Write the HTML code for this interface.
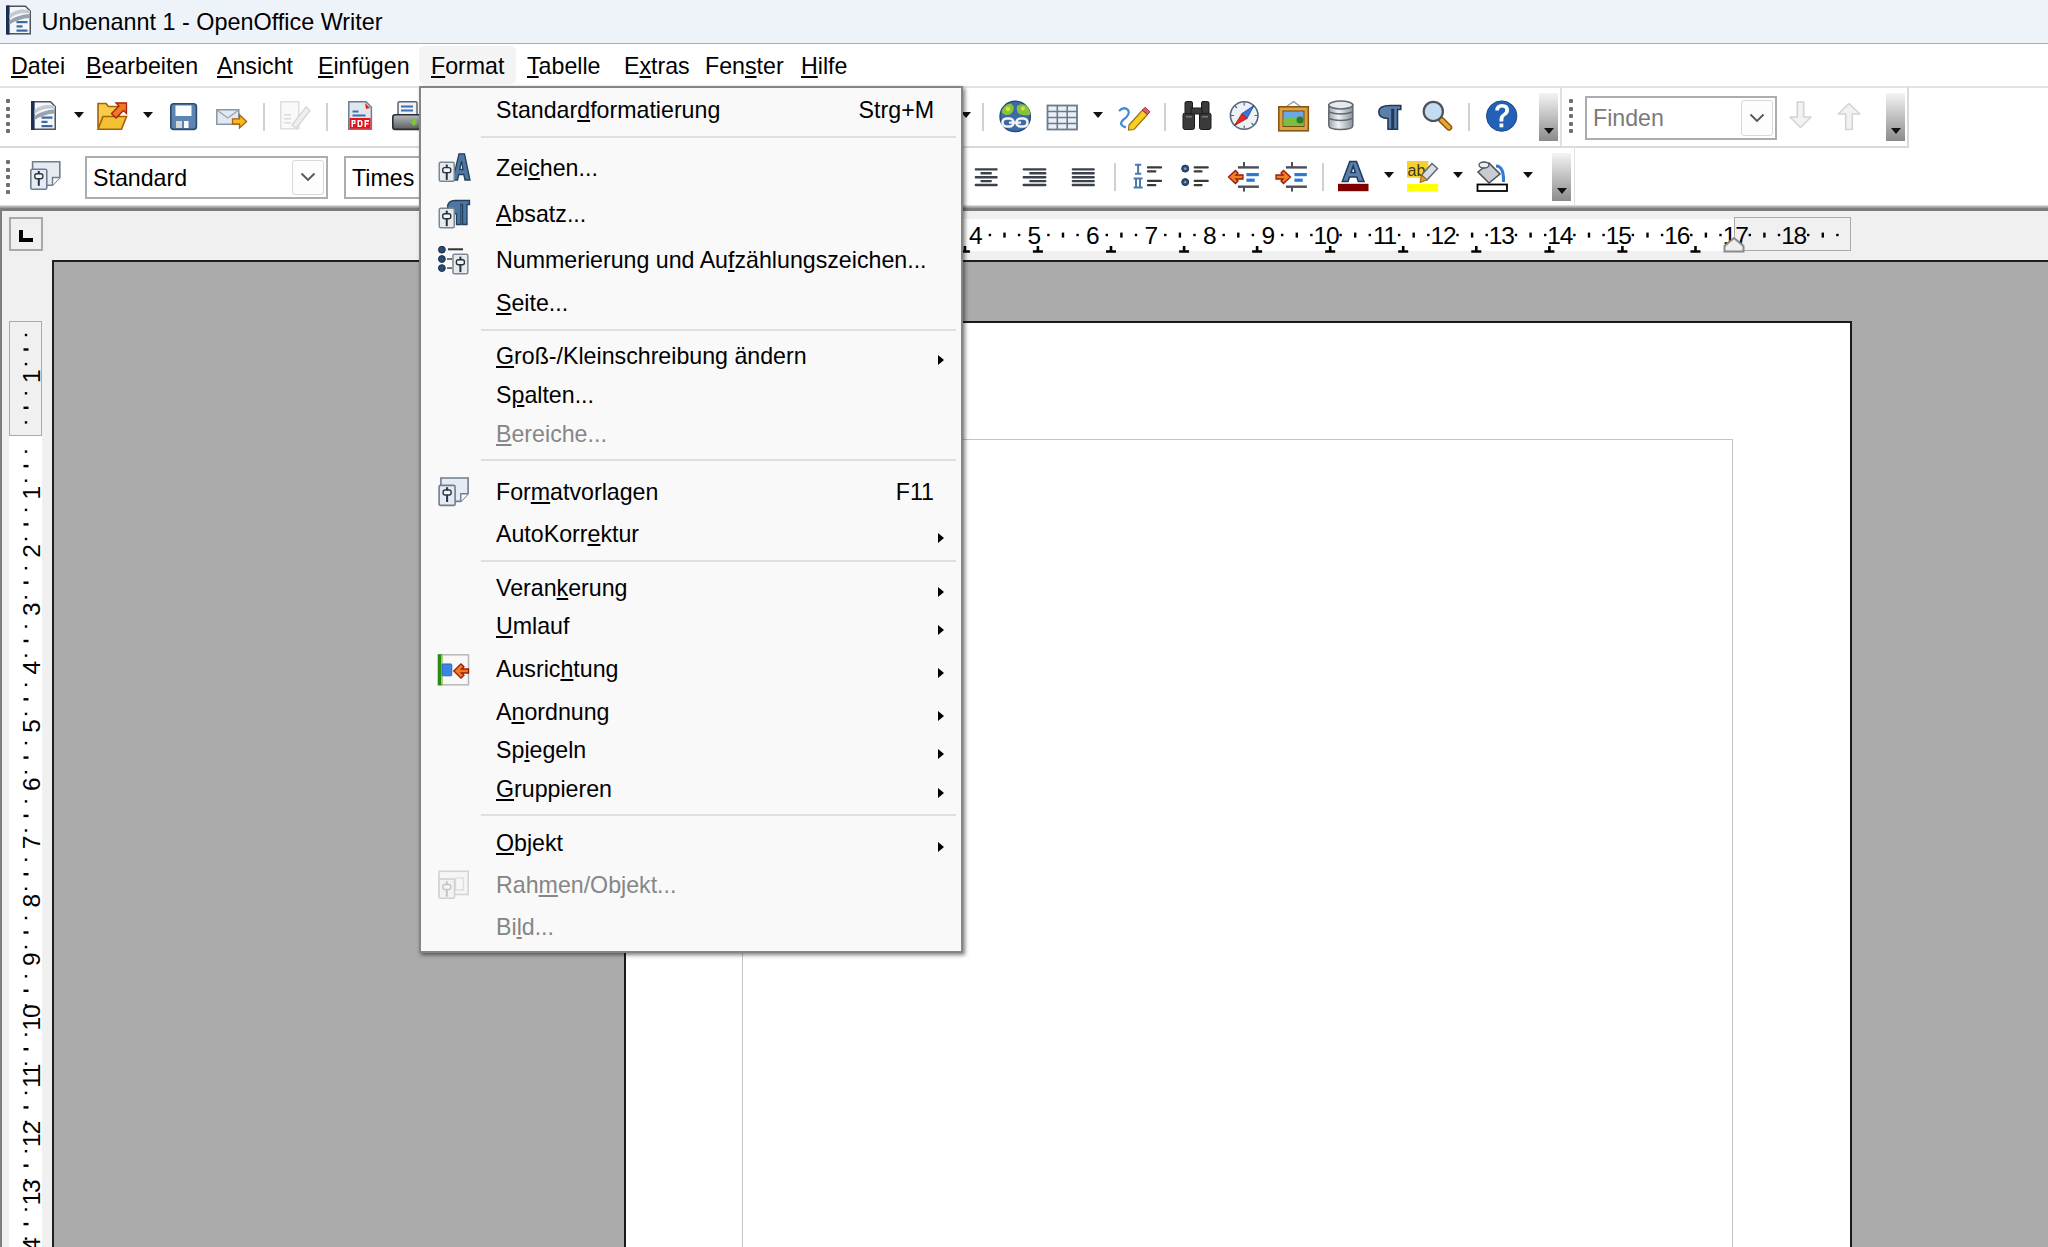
<!DOCTYPE html>
<html><head><meta charset="utf-8"><title>OpenOffice Writer</title>
<style>
html,body{margin:0;padding:0}
body{width:2048px;height:1247px;position:relative;overflow:hidden;background:#fff;font-family:'Liberation Sans', sans-serif}
.t{position:absolute;white-space:nowrap;line-height:30px}
svg{overflow:hidden}
u{text-decoration:underline;text-decoration-thickness:2px;text-underline-offset:2px}
</style></head><body>
<div style="position:absolute;left:0px;top:0px;width:2048px;height:43px;background:#eef3fa"></div>
<div style="position:absolute;left:0px;top:43px;width:2048px;height:1px;background:#a9abae"></div>
<div class="t" style="left:41.5px;top:7px;font-size:23.4px;color:#000;">Unbenannt 1 - OpenOffice Writer</div>
<div style="position:absolute;left:0px;top:44px;width:2048px;height:42px;background:#fff"></div>
<div style="position:absolute;left:419px;top:45.5px;width:97px;height:38.5px;background:#f4f4f4;border-radius:5px"></div>
<div class="t" style="left:11px;top:51px;font-size:23.2px;color:#000;"><u>D</u>atei</div>
<div class="t" style="left:86px;top:51px;font-size:23.2px;color:#000;"><u>B</u>earbeiten</div>
<div class="t" style="left:217px;top:51px;font-size:23.2px;color:#000;"><u>A</u>nsicht</div>
<div class="t" style="left:318px;top:51px;font-size:23.2px;color:#000;"><u>E</u>infügen</div>
<div class="t" style="left:431px;top:51px;font-size:23.2px;color:#000;"><u>F</u>ormat</div>
<div class="t" style="left:527px;top:51px;font-size:23.2px;color:#000;"><u>T</u>abelle</div>
<div class="t" style="left:624px;top:51px;font-size:23.2px;color:#000;">E<u>x</u>tras</div>
<div class="t" style="left:705px;top:51px;font-size:23.2px;color:#000;">Fen<u>s</u>ter</div>
<div class="t" style="left:801px;top:51px;font-size:23.2px;color:#000;"><u>H</u>ilfe</div>
<div style="position:absolute;left:0px;top:87px;width:2048px;height:118px;background:#fff"></div>
<div style="position:absolute;left:0px;top:85.5px;width:2048px;height:2px;background:#e4e4e4"></div>
<div style="position:absolute;left:0px;top:146px;width:1909px;height:1.8px;background:#dadada"></div>
<div style="position:absolute;left:1559.8px;top:87px;width:1.8px;height:59px;background:#e0e0e0"></div>
<div style="position:absolute;left:1907.2px;top:87px;width:1.8px;height:60px;background:#dadada"></div>
<div style="position:absolute;left:1573.5px;top:147px;width:1.8px;height:58px;background:#e0e0e0"></div>
<div style="position:absolute;left:0px;top:205px;width:2048px;height:6px;background:linear-gradient(#e6e6e6,#a8a8a8 35%,#7b7b7b 60%,#7b7b7b)"></div>
<div style="position:absolute;left:6px;top:99px;width:4px;height:4px;background:#6f6f6f;border-radius:1px"></div>
<div style="position:absolute;left:6px;top:107px;width:4px;height:4px;background:#6f6f6f;border-radius:1px"></div>
<div style="position:absolute;left:6px;top:114px;width:4px;height:4px;background:#6f6f6f;border-radius:1px"></div>
<div style="position:absolute;left:6px;top:122px;width:4px;height:4px;background:#6f6f6f;border-radius:1px"></div>
<div style="position:absolute;left:6px;top:129px;width:4px;height:4px;background:#6f6f6f;border-radius:1px"></div>
<div style="position:absolute;left:6px;top:160px;width:4px;height:4px;background:#6f6f6f;border-radius:1px"></div>
<div style="position:absolute;left:6px;top:168px;width:4px;height:4px;background:#6f6f6f;border-radius:1px"></div>
<div style="position:absolute;left:6px;top:175px;width:4px;height:4px;background:#6f6f6f;border-radius:1px"></div>
<div style="position:absolute;left:6px;top:183px;width:4px;height:4px;background:#6f6f6f;border-radius:1px"></div>
<div style="position:absolute;left:6px;top:190px;width:4px;height:4px;background:#6f6f6f;border-radius:1px"></div>
<div style="position:absolute;left:1569px;top:99px;width:4px;height:4px;background:#6f6f6f;border-radius:1px"></div>
<div style="position:absolute;left:1569px;top:107px;width:4px;height:4px;background:#6f6f6f;border-radius:1px"></div>
<div style="position:absolute;left:1569px;top:114px;width:4px;height:4px;background:#6f6f6f;border-radius:1px"></div>
<div style="position:absolute;left:1569px;top:122px;width:4px;height:4px;background:#6f6f6f;border-radius:1px"></div>
<div style="position:absolute;left:1569px;top:129px;width:4px;height:4px;background:#6f6f6f;border-radius:1px"></div>
<div style="position:absolute;left:263px;top:103px;width:2px;height:28px;background:#d0d0d0"></div>
<div style="position:absolute;left:326px;top:103px;width:2px;height:28px;background:#d0d0d0"></div>
<div style="position:absolute;left:982px;top:103px;width:2px;height:28px;background:#d0d0d0"></div>
<div style="position:absolute;left:1164px;top:103px;width:2px;height:28px;background:#d0d0d0"></div>
<div style="position:absolute;left:1468px;top:103px;width:2px;height:28px;background:#d0d0d0"></div>
<div style="position:absolute;left:1114px;top:163px;width:2px;height:28px;background:#d0d0d0"></div>
<div style="position:absolute;left:1322px;top:163px;width:2px;height:28px;background:#d0d0d0"></div>
<div style="position:absolute;left:73.5px;top:112px;width:0;height:0;border-left:5px solid transparent;border-right:5px solid transparent;border-top:6px solid #111"></div>
<div style="position:absolute;left:143px;top:112px;width:0;height:0;border-left:5px solid transparent;border-right:5px solid transparent;border-top:6px solid #111"></div>
<div style="position:absolute;left:1092.7px;top:112px;width:0;height:0;border-left:5px solid transparent;border-right:5px solid transparent;border-top:6px solid #111"></div>
<div style="position:absolute;left:1384px;top:172px;width:0;height:0;border-left:5px solid transparent;border-right:5px solid transparent;border-top:6px solid #111"></div>
<div style="position:absolute;left:1453.3px;top:172px;width:0;height:0;border-left:5px solid transparent;border-right:5px solid transparent;border-top:6px solid #111"></div>
<div style="position:absolute;left:1523px;top:172px;width:0;height:0;border-left:5px solid transparent;border-right:5px solid transparent;border-top:6px solid #111"></div>
<div style="position:absolute;left:961px;top:112px;width:0;height:0;border-left:5px solid transparent;border-right:5px solid transparent;border-top:6px solid #111"></div>
<div style="position:absolute;left:1539px;top:93px;width:19px;height:48px;background:linear-gradient(#f4f4f4,#8b8b8b)"></div>
<div style="position:absolute;left:1543.5px;top:128px;width:0;height:0;border-left:5px solid transparent;border-right:5px solid transparent;border-top:6px solid #111"></div>
<div style="position:absolute;left:1552px;top:153px;width:19px;height:48px;background:linear-gradient(#f4f4f4,#8b8b8b)"></div>
<div style="position:absolute;left:1556.5px;top:188px;width:0;height:0;border-left:5px solid transparent;border-right:5px solid transparent;border-top:6px solid #111"></div>
<div style="position:absolute;left:1886px;top:93px;width:19px;height:48px;background:linear-gradient(#f4f4f4,#8b8b8b)"></div>
<div style="position:absolute;left:1890.5px;top:128px;width:0;height:0;border-left:5px solid transparent;border-right:5px solid transparent;border-top:6px solid #111"></div>
<div style="position:absolute;left:85px;top:155.5px;width:243px;height:43px;background:#fff;border:2px solid #aaaeb2;box-sizing:border-box"></div>
<div style="position:absolute;left:292px;top:159.5px;width:32px;height:35px;background:#fdfdfd;border:1px solid #d8d8d8;border-radius:3px;box-sizing:border-box"></div>
<svg style="position:absolute;left:300px;top:172.0px" width="16" height="10"><path d="M1.5 1.5 L8 8 L14.5 1.5" fill="none" stroke="#555" stroke-width="1.8"/></svg>
<div style="position:absolute;left:344px;top:155.5px;width:90px;height:43px;background:#fff;border:2px solid #aaaeb2;box-sizing:border-box"></div>
<div style="position:absolute;left:1585px;top:95.5px;width:192px;height:44px;background:#fff;border:2px solid #aaaeb2;box-sizing:border-box"></div>
<div style="position:absolute;left:1741px;top:99.5px;width:32px;height:36px;background:#fdfdfd;border:1px solid #d8d8d8;border-radius:3px;box-sizing:border-box"></div>
<svg style="position:absolute;left:1749px;top:112.5px" width="16" height="10"><path d="M1.5 1.5 L8 8 L14.5 1.5" fill="none" stroke="#555" stroke-width="1.8"/></svg>
<div class="t" style="left:93px;top:163px;font-size:23.2px;color:#000;">Standard</div>
<div class="t" style="left:352px;top:163px;font-size:23.2px;color:#000;">Times</div>
<div class="t" style="left:1593px;top:103px;font-size:23.2px;color:#7a7a7a;">Finden</div>
<div style="position:absolute;left:0px;top:211px;width:2048px;height:1036px;background:#f0f0f0"></div>
<div style="position:absolute;left:0px;top:209px;width:2px;height:1038px;background:#7d7d7d"></div>
<div style="position:absolute;left:8.5px;top:217px;width:34px;height:34px;border:2px solid #a9a9a9;box-sizing:border-box;background:#f0f0f0"></div>
<svg style="position:absolute;left:19px;top:230px" width="15" height="12"><path d="M2 0 V10 H14" fill="none" stroke="#000" stroke-width="4"/></svg>
<div style="position:absolute;left:52px;top:260px;width:1996px;height:987px;background:#ababab"></div>
<div style="position:absolute;left:52px;top:260px;width:1996px;height:2px;background:#1e1e1e"></div>
<div style="position:absolute;left:52px;top:260px;width:2px;height:987px;background:#1e1e1e"></div>
<div style="position:absolute;left:742px;top:218.5px;width:992px;height:32.5px;background:#fff"></div>
<div style="position:absolute;left:1734px;top:217px;width:117px;height:34px;border:1.5px solid #a9a9a9;box-sizing:border-box;background:#f0f0f0"></div>
<div style="position:absolute;left:624px;top:217px;width:118px;height:34px;border:1.5px solid #a9a9a9;box-sizing:border-box;background:#f0f0f0"></div>
<div style="position:absolute;left:9px;top:436px;width:33px;height:811px;background:#fff"></div>
<div style="position:absolute;left:9px;top:321px;width:33px;height:115px;border:1.5px solid #a9a9a9;box-sizing:border-box;background:#f0f0f0"></div>
<svg style="position:absolute;left:0;top:0" width="2048" height="1247"><text x="624.6" y="244" text-anchor="middle" font-family="Liberation Sans" font-size="24.5" fill="#000" letter-spacing="-1.2">2</text><rect x="638.0" y="233.8" width="2.4" height="2.4" fill="#000"/><rect x="652.6" y="232.6" width="2.4" height="5" fill="#000"/><rect x="667.2" y="233.8" width="2.4" height="2.4" fill="#000"/><text x="683.0" y="244" text-anchor="middle" font-family="Liberation Sans" font-size="24.5" fill="#000" letter-spacing="-1.2">1</text><rect x="696.5" y="233.8" width="2.4" height="2.4" fill="#000"/><rect x="711.1" y="232.6" width="2.4" height="5" fill="#000"/><rect x="725.7" y="233.8" width="2.4" height="2.4" fill="#000"/><rect x="754.9" y="233.8" width="2.4" height="2.4" fill="#000"/><rect x="769.5" y="232.6" width="2.4" height="5" fill="#000"/><rect x="784.1" y="233.8" width="2.4" height="2.4" fill="#000"/><text x="800.0" y="244" text-anchor="middle" font-family="Liberation Sans" font-size="24.5" fill="#000" letter-spacing="-1.2">1</text><rect x="813.4" y="233.8" width="2.4" height="2.4" fill="#000"/><rect x="828.0" y="232.6" width="2.4" height="5" fill="#000"/><rect x="842.6" y="233.8" width="2.4" height="2.4" fill="#000"/><text x="858.4" y="244" text-anchor="middle" font-family="Liberation Sans" font-size="24.5" fill="#000" letter-spacing="-1.2">2</text><rect x="871.8" y="233.8" width="2.4" height="2.4" fill="#000"/><rect x="886.4" y="232.6" width="2.4" height="5" fill="#000"/><rect x="901.0" y="233.8" width="2.4" height="2.4" fill="#000"/><text x="916.9" y="244" text-anchor="middle" font-family="Liberation Sans" font-size="24.5" fill="#000" letter-spacing="-1.2">3</text><rect x="930.3" y="233.8" width="2.4" height="2.4" fill="#000"/><rect x="944.9" y="232.6" width="2.4" height="5" fill="#000"/><rect x="959.5" y="233.8" width="2.4" height="2.4" fill="#000"/><text x="975.3" y="244" text-anchor="middle" font-family="Liberation Sans" font-size="24.5" fill="#000" letter-spacing="-1.2">4</text><rect x="988.7" y="233.8" width="2.4" height="2.4" fill="#000"/><rect x="1003.3" y="232.6" width="2.4" height="5" fill="#000"/><rect x="1017.9" y="233.8" width="2.4" height="2.4" fill="#000"/><text x="1033.8" y="244" text-anchor="middle" font-family="Liberation Sans" font-size="24.5" fill="#000" letter-spacing="-1.2">5</text><rect x="1047.2" y="233.8" width="2.4" height="2.4" fill="#000"/><rect x="1061.8" y="232.6" width="2.4" height="5" fill="#000"/><rect x="1076.4" y="233.8" width="2.4" height="2.4" fill="#000"/><text x="1092.2" y="244" text-anchor="middle" font-family="Liberation Sans" font-size="24.5" fill="#000" letter-spacing="-1.2">6</text><rect x="1105.6" y="233.8" width="2.4" height="2.4" fill="#000"/><rect x="1120.2" y="232.6" width="2.4" height="5" fill="#000"/><rect x="1134.8" y="233.8" width="2.4" height="2.4" fill="#000"/><text x="1150.7" y="244" text-anchor="middle" font-family="Liberation Sans" font-size="24.5" fill="#000" letter-spacing="-1.2">7</text><rect x="1164.1" y="233.8" width="2.4" height="2.4" fill="#000"/><rect x="1178.7" y="232.6" width="2.4" height="5" fill="#000"/><rect x="1193.3" y="233.8" width="2.4" height="2.4" fill="#000"/><text x="1209.1" y="244" text-anchor="middle" font-family="Liberation Sans" font-size="24.5" fill="#000" letter-spacing="-1.2">8</text><rect x="1222.5" y="233.8" width="2.4" height="2.4" fill="#000"/><rect x="1237.1" y="232.6" width="2.4" height="5" fill="#000"/><rect x="1251.7" y="233.8" width="2.4" height="2.4" fill="#000"/><text x="1267.6" y="244" text-anchor="middle" font-family="Liberation Sans" font-size="24.5" fill="#000" letter-spacing="-1.2">9</text><rect x="1281.0" y="233.8" width="2.4" height="2.4" fill="#000"/><rect x="1295.6" y="232.6" width="2.4" height="5" fill="#000"/><rect x="1310.2" y="233.8" width="2.4" height="2.4" fill="#000"/><text x="1326.0" y="244" text-anchor="middle" font-family="Liberation Sans" font-size="24.5" fill="#000" letter-spacing="-1.2">10</text><rect x="1339.4" y="233.8" width="2.4" height="2.4" fill="#000"/><rect x="1354.0" y="232.6" width="2.4" height="5" fill="#000"/><rect x="1368.6" y="233.8" width="2.4" height="2.4" fill="#000"/><text x="1384.5" y="244" text-anchor="middle" font-family="Liberation Sans" font-size="24.5" fill="#000" letter-spacing="-1.2">11</text><rect x="1397.9" y="233.8" width="2.4" height="2.4" fill="#000"/><rect x="1412.5" y="232.6" width="2.4" height="5" fill="#000"/><rect x="1427.1" y="233.8" width="2.4" height="2.4" fill="#000"/><text x="1442.9" y="244" text-anchor="middle" font-family="Liberation Sans" font-size="24.5" fill="#000" letter-spacing="-1.2">12</text><rect x="1456.3" y="233.8" width="2.4" height="2.4" fill="#000"/><rect x="1470.9" y="232.6" width="2.4" height="5" fill="#000"/><rect x="1485.5" y="233.8" width="2.4" height="2.4" fill="#000"/><text x="1501.3" y="244" text-anchor="middle" font-family="Liberation Sans" font-size="24.5" fill="#000" letter-spacing="-1.2">13</text><rect x="1514.8" y="233.8" width="2.4" height="2.4" fill="#000"/><rect x="1529.4" y="232.6" width="2.4" height="5" fill="#000"/><rect x="1544.0" y="233.8" width="2.4" height="2.4" fill="#000"/><text x="1559.8" y="244" text-anchor="middle" font-family="Liberation Sans" font-size="24.5" fill="#000" letter-spacing="-1.2">14</text><rect x="1573.2" y="233.8" width="2.4" height="2.4" fill="#000"/><rect x="1587.8" y="232.6" width="2.4" height="5" fill="#000"/><rect x="1602.4" y="233.8" width="2.4" height="2.4" fill="#000"/><text x="1618.2" y="244" text-anchor="middle" font-family="Liberation Sans" font-size="24.5" fill="#000" letter-spacing="-1.2">15</text><rect x="1631.7" y="233.8" width="2.4" height="2.4" fill="#000"/><rect x="1646.3" y="232.6" width="2.4" height="5" fill="#000"/><rect x="1660.9" y="233.8" width="2.4" height="2.4" fill="#000"/><text x="1676.7" y="244" text-anchor="middle" font-family="Liberation Sans" font-size="24.5" fill="#000" letter-spacing="-1.2">16</text><rect x="1690.1" y="233.8" width="2.4" height="2.4" fill="#000"/><rect x="1704.7" y="232.6" width="2.4" height="5" fill="#000"/><rect x="1719.3" y="233.8" width="2.4" height="2.4" fill="#000"/><text x="1735.2" y="244" text-anchor="middle" font-family="Liberation Sans" font-size="24.5" fill="#000" letter-spacing="-1.2">17</text><rect x="1748.6" y="233.8" width="2.4" height="2.4" fill="#000"/><rect x="1763.2" y="232.6" width="2.4" height="5" fill="#000"/><rect x="1777.8" y="233.8" width="2.4" height="2.4" fill="#000"/><text x="1793.6" y="244" text-anchor="middle" font-family="Liberation Sans" font-size="24.5" fill="#000" letter-spacing="-1.2">18</text><rect x="1807.0" y="233.8" width="2.4" height="2.4" fill="#000"/><rect x="1821.6" y="232.6" width="2.4" height="5" fill="#000"/><rect x="1836.2" y="233.8" width="2.4" height="2.4" fill="#000"/><path d="M745.7 246 V252 M740.7 251.5 H750.7" stroke="#000" stroke-width="2.6" fill="none"/><path d="M818.8 246 V252 M813.8 251.5 H823.8" stroke="#000" stroke-width="2.6" fill="none"/><path d="M891.8 246 V252 M886.8 251.5 H896.8" stroke="#000" stroke-width="2.6" fill="none"/><path d="M964.9 246 V252 M959.9 251.5 H969.9" stroke="#000" stroke-width="2.6" fill="none"/><path d="M1037.9 246 V252 M1032.9 251.5 H1042.9" stroke="#000" stroke-width="2.6" fill="none"/><path d="M1111.0 246 V252 M1106.0 251.5 H1116.0" stroke="#000" stroke-width="2.6" fill="none"/><path d="M1184.1 246 V252 M1179.1 251.5 H1189.1" stroke="#000" stroke-width="2.6" fill="none"/><path d="M1257.1 246 V252 M1252.1 251.5 H1262.1" stroke="#000" stroke-width="2.6" fill="none"/><path d="M1330.2 246 V252 M1325.2 251.5 H1335.2" stroke="#000" stroke-width="2.6" fill="none"/><path d="M1403.2 246 V252 M1398.2 251.5 H1408.2" stroke="#000" stroke-width="2.6" fill="none"/><path d="M1476.3 246 V252 M1471.3 251.5 H1481.3" stroke="#000" stroke-width="2.6" fill="none"/><path d="M1549.4 246 V252 M1544.4 251.5 H1554.4" stroke="#000" stroke-width="2.6" fill="none"/><path d="M1622.4 246 V252 M1617.4 251.5 H1627.4" stroke="#000" stroke-width="2.6" fill="none"/><path d="M1695.5 246 V252 M1690.5 251.5 H1700.5" stroke="#000" stroke-width="2.6" fill="none"/><path d="M1724.5 251.5 V246 L1734 238 L1743.5 246 V251.5 Z" fill="#eeeeee" stroke="#8a8a8a" stroke-width="2"/><rect x="24.8" y="333.8" width="2.4" height="2.4" fill="#000"/><rect x="23.5" y="348.3" width="5" height="2.4" fill="#000"/><rect x="24.8" y="362.9" width="2.4" height="2.4" fill="#000"/><text transform="translate(39.5,376.7) rotate(-90)" x="0" y="0" text-anchor="middle" font-family="Liberation Sans" font-size="24.5" letter-spacing="-1.2" fill="#000">1</text><rect x="24.8" y="392.1" width="2.4" height="2.4" fill="#000"/><rect x="23.5" y="406.6" width="5" height="2.4" fill="#000"/><rect x="24.8" y="421.2" width="2.4" height="2.4" fill="#000"/><rect x="24.8" y="450.4" width="2.4" height="2.4" fill="#000"/><rect x="23.5" y="464.9" width="5" height="2.4" fill="#000"/><rect x="24.8" y="479.5" width="2.4" height="2.4" fill="#000"/><text transform="translate(39.5,493.3) rotate(-90)" x="0" y="0" text-anchor="middle" font-family="Liberation Sans" font-size="24.5" letter-spacing="-1.2" fill="#000">1</text><rect x="24.8" y="508.7" width="2.4" height="2.4" fill="#000"/><rect x="23.5" y="523.2" width="5" height="2.4" fill="#000"/><rect x="24.8" y="537.8" width="2.4" height="2.4" fill="#000"/><text transform="translate(39.5,551.6) rotate(-90)" x="0" y="0" text-anchor="middle" font-family="Liberation Sans" font-size="24.5" letter-spacing="-1.2" fill="#000">2</text><rect x="24.8" y="567.0" width="2.4" height="2.4" fill="#000"/><rect x="23.5" y="581.5" width="5" height="2.4" fill="#000"/><rect x="24.8" y="596.1" width="2.4" height="2.4" fill="#000"/><text transform="translate(39.5,609.9) rotate(-90)" x="0" y="0" text-anchor="middle" font-family="Liberation Sans" font-size="24.5" letter-spacing="-1.2" fill="#000">3</text><rect x="24.8" y="625.3" width="2.4" height="2.4" fill="#000"/><rect x="23.5" y="639.8" width="5" height="2.4" fill="#000"/><rect x="24.8" y="654.4" width="2.4" height="2.4" fill="#000"/><text transform="translate(39.5,668.2) rotate(-90)" x="0" y="0" text-anchor="middle" font-family="Liberation Sans" font-size="24.5" letter-spacing="-1.2" fill="#000">4</text><rect x="24.8" y="683.6" width="2.4" height="2.4" fill="#000"/><rect x="23.5" y="698.1" width="5" height="2.4" fill="#000"/><rect x="24.8" y="712.7" width="2.4" height="2.4" fill="#000"/><text transform="translate(39.5,726.5) rotate(-90)" x="0" y="0" text-anchor="middle" font-family="Liberation Sans" font-size="24.5" letter-spacing="-1.2" fill="#000">5</text><rect x="24.8" y="741.9" width="2.4" height="2.4" fill="#000"/><rect x="23.5" y="756.4" width="5" height="2.4" fill="#000"/><rect x="24.8" y="771.0" width="2.4" height="2.4" fill="#000"/><text transform="translate(39.5,784.8) rotate(-90)" x="0" y="0" text-anchor="middle" font-family="Liberation Sans" font-size="24.5" letter-spacing="-1.2" fill="#000">6</text><rect x="24.8" y="800.2" width="2.4" height="2.4" fill="#000"/><rect x="23.5" y="814.7" width="5" height="2.4" fill="#000"/><rect x="24.8" y="829.3" width="2.4" height="2.4" fill="#000"/><text transform="translate(39.5,843.1) rotate(-90)" x="0" y="0" text-anchor="middle" font-family="Liberation Sans" font-size="24.5" letter-spacing="-1.2" fill="#000">7</text><rect x="24.8" y="858.5" width="2.4" height="2.4" fill="#000"/><rect x="23.5" y="873.0" width="5" height="2.4" fill="#000"/><rect x="24.8" y="887.6" width="2.4" height="2.4" fill="#000"/><text transform="translate(39.5,901.4) rotate(-90)" x="0" y="0" text-anchor="middle" font-family="Liberation Sans" font-size="24.5" letter-spacing="-1.2" fill="#000">8</text><rect x="24.8" y="916.8" width="2.4" height="2.4" fill="#000"/><rect x="23.5" y="931.3" width="5" height="2.4" fill="#000"/><rect x="24.8" y="945.9" width="2.4" height="2.4" fill="#000"/><text transform="translate(39.5,959.7) rotate(-90)" x="0" y="0" text-anchor="middle" font-family="Liberation Sans" font-size="24.5" letter-spacing="-1.2" fill="#000">9</text><rect x="24.8" y="975.1" width="2.4" height="2.4" fill="#000"/><rect x="23.5" y="989.6" width="5" height="2.4" fill="#000"/><rect x="24.8" y="1004.2" width="2.4" height="2.4" fill="#000"/><text transform="translate(39.5,1018.0) rotate(-90)" x="0" y="0" text-anchor="middle" font-family="Liberation Sans" font-size="24.5" letter-spacing="-1.2" fill="#000">10</text><rect x="24.8" y="1033.4" width="2.4" height="2.4" fill="#000"/><rect x="23.5" y="1048.0" width="5" height="2.4" fill="#000"/><rect x="24.8" y="1062.5" width="2.4" height="2.4" fill="#000"/><text transform="translate(39.5,1076.3) rotate(-90)" x="0" y="0" text-anchor="middle" font-family="Liberation Sans" font-size="24.5" letter-spacing="-1.2" fill="#000">11</text><rect x="24.8" y="1091.7" width="2.4" height="2.4" fill="#000"/><rect x="23.5" y="1106.2" width="5" height="2.4" fill="#000"/><rect x="24.8" y="1120.8" width="2.4" height="2.4" fill="#000"/><text transform="translate(39.5,1134.6) rotate(-90)" x="0" y="0" text-anchor="middle" font-family="Liberation Sans" font-size="24.5" letter-spacing="-1.2" fill="#000">12</text><rect x="24.8" y="1150.0" width="2.4" height="2.4" fill="#000"/><rect x="23.5" y="1164.5" width="5" height="2.4" fill="#000"/><rect x="24.8" y="1179.1" width="2.4" height="2.4" fill="#000"/><text transform="translate(39.5,1192.9) rotate(-90)" x="0" y="0" text-anchor="middle" font-family="Liberation Sans" font-size="24.5" letter-spacing="-1.2" fill="#000">13</text><rect x="24.8" y="1208.3" width="2.4" height="2.4" fill="#000"/><rect x="23.5" y="1222.9" width="5" height="2.4" fill="#000"/><rect x="24.8" y="1237.4" width="2.4" height="2.4" fill="#000"/><text transform="translate(39.5,1251.2) rotate(-90)" x="0" y="0" text-anchor="middle" font-family="Liberation Sans" font-size="24.5" letter-spacing="-1.2" fill="#000">14</text></svg>
<div style="position:absolute;left:624px;top:321px;width:1228px;height:926px;background:#fff;border:2px solid #1a1a1a;border-bottom:none;box-sizing:border-box"></div>
<div style="position:absolute;left:742px;top:439px;width:991px;height:808px;border:1px solid #c4c4c4;border-bottom:none;box-sizing:border-box"></div>
<svg style="position:absolute;left:0;top:0" width="2048" height="1247"><g transform="translate(6,5.5) scale(1.0)">
<path d="M1.5 0.75 H19.5 L24.25 5.5 V28.25 H1.5 Z" fill="#f3f6fa" stroke="#4e545a" stroke-width="1.5"/>
<rect x="0" y="0" width="3.6" height="29" fill="#1c2f50"/>
<path d="M3.5 9 Q12 2 24 5 L24 8 Q13 6 3.5 13 Z" fill="#c2c9d1"/>
<path d="M3.5 15 Q12 9 24 8.5 L24 12.5 Q13 13 3.5 19 Z" fill="#98a3ae"/>
<rect x="10.5" y="15.5" width="11" height="2.2" fill="#3d68a0"/>
<rect x="10.5" y="19.8" width="6" height="2.2" fill="#3d68a0"/>
<rect x="10.5" y="24" width="11" height="2.2" fill="#3d68a0"/>
</g><g transform="translate(31,101) scale(1.0)">
<path d="M1.5 0.75 H19.5 L24.25 5.5 V28.25 H1.5 Z" fill="#f3f6fa" stroke="#4e545a" stroke-width="1.5"/>
<rect x="0" y="0" width="3.6" height="29" fill="#1c2f50"/>
<path d="M3.5 9 Q12 2 24 5 L24 8 Q13 6 3.5 13 Z" fill="#c2c9d1"/>
<path d="M3.5 15 Q12 9 24 8.5 L24 12.5 Q13 13 3.5 19 Z" fill="#98a3ae"/>
<rect x="10.5" y="15.5" width="11" height="2.2" fill="#3d68a0"/>
<rect x="10.5" y="19.8" width="6" height="2.2" fill="#3d68a0"/>
<rect x="10.5" y="24" width="11" height="2.2" fill="#3d68a0"/>
</g>
<path d="M98 103.5 H106 L108.5 106.5 H119 V127 H98 Z" fill="#f6cc48" stroke="#a6600c" stroke-width="1.6"/>
<path d="M103 116.5 H126.5 L121.5 129.2 H98 Z" fill="#f2c232" stroke="#a6600c" stroke-width="1.6"/>
<path d="M111.5 113.5 L119 106 L116 103 H126.5 V113.5 L123.5 110.5 L116 118 Z" fill="#ee7a22" stroke="#a8200c" stroke-width="1.3"/>
<rect x="170.8" y="103.8" width="25.6" height="25.6" rx="3" fill="#5c85b2" stroke="#2b4a6f" stroke-width="1.6"/>
<rect x="175.5" y="105.5" width="16" height="10.5" fill="#fbfcfd"/>
<rect x="176" y="121" width="6" height="7" fill="#d6d6d6"/><rect x="184" y="121" width="4.5" height="7" fill="#fdfdfd"/>
<rect x="216.8" y="109.8" width="22" height="14.5" fill="#e2e9f0" stroke="#8796a4" stroke-width="1.5"/>
<path d="M217.5 110.5 L227.8 118 L238 110.5" fill="none" stroke="#98a4b0" stroke-width="1.3"/>
<path d="M232.5 118.8 H239.5 V114.8 L246.6 121.4 L239.5 128 V124 H232.5 Z" fill="#f4bc22" stroke="#b0600e" stroke-width="1.3"/>
<g opacity="1"><rect x="280.8" y="101.8" width="18" height="27" fill="#f9f9f9" stroke="#dedede" stroke-width="1.5"/><path d="M292 125 L306 107 L310 110.5 L296 128.5 Z" fill="#efefef" stroke="#d6d6d6" stroke-width="1.3"/><rect x="284" y="114" width="7" height="1.5" fill="#dcdcdc"/><rect x="284" y="118" width="7" height="1.5" fill="#dcdcdc"/><rect x="284" y="122" width="7" height="1.5" fill="#dcdcdc"/></g>
<path d="M348.8 101.8 H366 L371.4 107.2 V129.3 H348.8 Z" fill="#dfe6ee" stroke="#6d7d8e" stroke-width="1.5"/>
<path d="M365 103 L370 108 L366 109 Z" fill="#e02020"/>
<rect x="352.5" y="110.5" width="6" height="2" fill="#3f6fb0"/><rect x="352.5" y="114.5" width="13" height="2" fill="#3f6fb0"/>
<rect x="349.6" y="118" width="21" height="10.8" fill="#e3141c"/>
<path d="M351.5 120 h4 v4 h-2.5 v3 h-1.5z M357.5 120 h3.5 l1.5 1.5 v4 l-1.5 1.5 h-3.5z M364.5 120 h4.5 v1.8 h-3 v1.2 h2.5 v1.6 h-2.5 v2.4 h-1.5z" fill="#fff"/><rect x="353" y="121.3" width="1.2" height="1.5" fill="#e3141c"/><rect x="359" y="121.5" width="2" height="4" fill="#e3141c"/>
<rect x="398" y="101.8" width="19" height="15" rx="1.5" fill="#eef3f8" stroke="#5b6570" stroke-width="1.5"/>
<rect x="401" y="105.5" width="12" height="2" fill="#3f6fb0"/><rect x="401" y="109.5" width="12" height="2" fill="#3f6fb0"/>
<defs><linearGradient id="prg" x1="0" y1="0" x2="0" y2="1"><stop offset="0" stop-color="#b8bcc0"/><stop offset="1" stop-color="#5a5d60"/></linearGradient></defs>
<rect x="392.8" y="114.8" width="30" height="14.6" rx="2.5" fill="url(#prg)" stroke="#2b2d30" stroke-width="1.6"/>
<path d="M412 120 h4 v2 h2 l-4 4 l-4 -4 h2z" fill="#7cc830"/>
<circle cx="1015.2" cy="116.4" r="15.2" fill="#3b6aa6" stroke="#28487a" stroke-width="1.4"/>
<path d="M1001.5 112 Q1003 105 1010 103.5 Q1015 105 1013.5 110 Q1012 115 1007 115 Q1003 115 1001.5 112 Z" fill="#86c23a"/>
<path d="M1017 106 Q1022 102.5 1027 106 Q1030.5 110 1030 115 Q1024 116 1019 114 Q1016 111 1017 106 Z" fill="#86c23a"/>
<circle cx="1008" cy="109" r="2.2" fill="#d8e040"/><circle cx="1023" cy="108.5" r="2" fill="#d8e040"/>
<rect x="1002.5" y="118.5" width="11" height="8" rx="4" fill="none" stroke="#f4f4f4" stroke-width="2.6"/>
<rect x="1016.5" y="118.5" width="11" height="8" rx="4" fill="none" stroke="#f4f4f4" stroke-width="2.6"/>
<rect x="1009" y="121.5" width="12" height="2.2" fill="#f4f4f4"/>
<rect x="1047.5" y="105.5" width="29.5" height="24" fill="#e9eff5" stroke="#6a7b8d" stroke-width="1.8"/>
<path d="M1057.3 105.5 V129.5 M1067.2 105.5 V129.5 M1047.5 111.5 H1077 M1047.5 117.5 H1077 M1047.5 123.5 H1077" stroke="#6a7b8d" stroke-width="1.6" fill="none"/>
<path d="M1119 111 Q1124 106 1128 110 Q1131 114 1123 120 Q1118 125 1126 127.5" fill="none" stroke="#3b8ae0" stroke-width="2.2"/>
<path d="M1129 125 L1142.5 110 L1147.5 114.5 L1134 129.5 L1128.5 130 Z" fill="#f5d020" stroke="#9a6a20" stroke-width="1.2"/>
<path d="M1142.5 110 L1145 107.3 L1150 111.8 L1147.5 114.5 Z" fill="#e85a6a" stroke="#a03040" stroke-width="1"/>
<g fill="#3a3a3a" stroke="#1a1a1a" stroke-width="1"><rect x="1183" y="113" width="11.5" height="16.5" rx="2"/><rect x="1199.5" y="113" width="11.5" height="16.5" rx="2"/><rect x="1185" y="101.5" width="7.5" height="12" rx="1.5"/><rect x="1201.5" y="101.5" width="7.5" height="12" rx="1.5"/><rect x="1191" y="108" width="11" height="6"/></g>
<rect x="1186" y="116" width="6" height="1.5" fill="#777"/><rect x="1202" y="116" width="6" height="1.5" fill="#777"/>
<circle cx="1244.2" cy="115.5" r="13.8" fill="#eef2f6" stroke="#56677a" stroke-width="1.6"/>
<path d="M1244.2 102.5 v3 M1244.2 125.5 v3 M1231 115.5 h3 M1254.5 115.5 h3 M1235 106 l2 2 M1253.5 125 l-2 -2 M1253.5 106 l-2 2 M1235 125 l2 -2" stroke="#56677a" stroke-width="1.2"/>
<path d="M1254 105.5 L1247 118.5 L1242 113.5 Z" fill="#3a78d8" stroke="#1f4a90" stroke-width="0.8"/>
<path d="M1234.5 125.5 L1242 113.5 L1247 118.5 Z" fill="#e52a2a" stroke="#901818" stroke-width="0.8"/>
<path d="M1286 107 L1293.5 101.5 L1301 107" fill="none" stroke="#8a96a4" stroke-width="1.3"/>
<rect x="1278.8" y="106.8" width="29.5" height="24" fill="#d9a443" stroke="#8a5414" stroke-width="1.6"/>
<rect x="1283" y="111" width="21" height="15.5" fill="#6aa8e8" stroke="#7a4a10" stroke-width="1"/>
<path d="M1283.5 119 Q1293 116 1303.5 118 V126 H1283.5 Z" fill="#78c040"/>
<circle cx="1300" cy="120" r="3.5" fill="#2e7a2a"/>
<defs><linearGradient id="dbg" x1="0" y1="0" x2="1" y2="0"><stop offset="0" stop-color="#9aa2aa"/><stop offset="0.4" stop-color="#eef2f5"/><stop offset="1" stop-color="#8a9298"/></linearGradient></defs>
<path d="M1328.8 105 V125.5 Q1328.8 129.5 1340.8 129.5 Q1352.8 129.5 1352.8 125.5 V105 Z" fill="url(#dbg)" stroke="#62686e" stroke-width="1.5"/>
<ellipse cx="1340.8" cy="105" rx="12" ry="4" fill="#e4e9ee" stroke="#62686e" stroke-width="1.5"/>
<path d="M1328.8 112 Q1340.8 116 1352.8 112 M1328.8 118.5 Q1340.8 122.5 1352.8 118.5" fill="none" stroke="#62686e" stroke-width="1.4"/>
<path d="M1390 105.5 H1400.8 V109.5 H1397.5 V129.3 H1393.5 V109.5 H1392 V129.3 H1388 V118.5 Q1378.8 118.5 1378.8 112 Q1378.8 105.5 1390 105.5 Z" fill="#5b7fa8" stroke="#1f3b5c" stroke-width="1.6"/>
<line x1="1441.5" y1="120" x2="1449" y2="127.5" stroke="#8a5410" stroke-width="6.5" stroke-linecap="round"/>
<line x1="1441.5" y1="120" x2="1449" y2="127.5" stroke="#e8a830" stroke-width="3.6" stroke-linecap="round"/>
<circle cx="1433.3" cy="111.4" r="9.6" fill="#c4dcf2" stroke="#4e5256" stroke-width="2.2"/>
<circle cx="1501.7" cy="116.1" r="15.2" fill="#2361b6" stroke="#1b4a8e" stroke-width="1"/>
<path d="M1495.3 110.5 Q1495.3 104 1502 104 Q1509 104 1509 110 Q1509 114 1505 116 Q1503.3 117 1503.3 120 V121.5 H1499.5 V119.5 Q1499.5 115.5 1503 113.5 Q1505.3 112.3 1505.3 110.2 Q1505.3 107.4 1502 107.4 Q1499 107.4 1499 110.5 Z" fill="#ffffff"/>
<rect x="1499.5" y="123.5" width="3.8" height="3.8" fill="#fff"/>
<path d="M1797.3 102 H1803.7 V117 H1811 L1800.5 127.5 L1790 117 H1797.3 Z" fill="#f2f2f2" stroke="#d4d4d4" stroke-width="1.6" stroke-linejoin="round"/>
<path d="M1845.7 129.5 H1852.3 V114 H1859.8 L1849 103.5 L1838.2 114 H1845.7 Z" fill="#f2f2f2" stroke="#d4d4d4" stroke-width="1.6" stroke-linejoin="round"/>
<g transform="translate(30,161)"><path d="M2.6 0.8 H29.8 V16.5 L22.5 24.2 H2.6 Z" fill="#e4ebf2" stroke="#6f7e8e" stroke-width="1.6"/><path d="M29.8 16.5 H22.5 V24.2" fill="#fbfdff" stroke="#6f7e8e" stroke-width="1.4"/><rect x="0.8" y="8.2" width="16" height="20" rx="1.5" fill="#e4ebf2" stroke="#6f7e8e" stroke-width="1.6"/><rect x="4.8" y="12.8" width="8" height="5" rx="2" fill="#f4f4f4" stroke="#2a3440" stroke-width="1.4"/><rect x="7.8" y="10" width="2" height="3" fill="#2a3440"/><rect x="7.8" y="17.8" width="2" height="7" fill="#2a3440"/></g>
<rect x="974.7" y="168.2" width="23.0" height="2.4" rx="1" fill="#3b424c"/>
<rect x="980.4" y="172.1" width="11.5" height="2.4" rx="1" fill="#3b424c"/>
<rect x="974.7" y="176.0" width="23.0" height="2.4" rx="1" fill="#3b424c"/>
<rect x="980.4" y="179.89999999999998" width="11.5" height="2.4" rx="1" fill="#3b424c"/>
<rect x="974.7" y="183.79999999999998" width="23.0" height="2.4" rx="1" fill="#3b424c"/>
<rect x="1022.6" y="168.2" width="23.800000000000068" height="2.4" rx="1" fill="#3b424c"/>
<rect x="1029.2" y="172.1" width="17.200000000000045" height="2.4" rx="1" fill="#3b424c"/>
<rect x="1022.6" y="176.0" width="23.800000000000068" height="2.4" rx="1" fill="#3b424c"/>
<rect x="1029.2" y="179.89999999999998" width="17.200000000000045" height="2.4" rx="1" fill="#3b424c"/>
<rect x="1022.6" y="183.79999999999998" width="23.800000000000068" height="2.4" rx="1" fill="#3b424c"/>
<rect x="1071.7" y="168.2" width="23.1" height="2.4" rx="1" fill="#3b424c"/>
<rect x="1071.7" y="172.1" width="23.1" height="2.4" rx="1" fill="#3b424c"/>
<rect x="1071.7" y="176.0" width="23.1" height="2.4" rx="1" fill="#3b424c"/>
<rect x="1071.7" y="179.89999999999998" width="23.1" height="2.4" rx="1" fill="#3b424c"/>
<rect x="1071.7" y="183.79999999999998" width="23.1" height="2.4" rx="1" fill="#3b424c"/>
<path d="M1135 164.8 h6.2 M1138.1 164.8 v9 M1135 173.8 h6.2" stroke="#4a78b0" stroke-width="2" fill="none"/>
<path d="M1133.6 178.5 h9 M1136 178.5 v9 M1140 178.5 v9 M1133.6 187.5 h9" stroke="#4a78b0" stroke-width="2" fill="none"/>
<rect x="1146.9" y="166.3" width="15.199999999999818" height="2.3" rx="1" fill="#3a3a3a"/>
<rect x="1146.9" y="170.3" width="9.5" height="2.3" rx="1" fill="#3a3a3a"/>
<rect x="1146.9" y="179.8" width="15.199999999999818" height="2.3" rx="1" fill="#3a3a3a"/>
<rect x="1146.9" y="183.9" width="9.5" height="2.3" rx="1" fill="#3a3a3a"/>
<circle cx="1185.2" cy="168.6" r="3.5" fill="#2f5078" stroke="#18304e" stroke-width="1"/><circle cx="1185.2" cy="182.1" r="3.5" fill="#2f5078" stroke="#18304e" stroke-width="1"/><circle cx="1185.2" cy="168.6" r="1.2" fill="#8aa8c8"/><circle cx="1185.2" cy="182.1" r="1.2" fill="#8aa8c8"/>
<rect x="1193.6" y="166.3" width="15.200000000000045" height="2.3" rx="1" fill="#3a3a3a"/>
<rect x="1193.6" y="170.3" width="9.0" height="2.3" rx="1" fill="#3a3a3a"/>
<rect x="1193.6" y="179.8" width="15.200000000000045" height="2.3" rx="1" fill="#3a3a3a"/>
<rect x="1193.6" y="183.9" width="9.0" height="2.3" rx="1" fill="#3a3a3a"/>
<rect x="1237.9" y="166.2" width="21" height="2.4" fill="#4a5058"/>
<rect x="1243" y="162" width="2" height="5" fill="#4a5058"/>
<rect x="1237.9" y="185.5" width="21" height="2.4" fill="#4a5058"/>
<rect x="1243" y="186" width="2" height="5.5" fill="#4a5058"/>
<rect x="1246.4" y="173" width="12.4" height="3.2" fill="#2a7ad0"/>
<rect x="1246.4" y="178.6" width="8.3" height="3.2" fill="#2a7ad0"/>
<path d="M1228.5 177 L1235.5 170.5 L1238 173 L1236 175 H1243 V179 H1236 L1238 181 L1235.5 183.5 Z" fill="#f08020" stroke="#9a1a0a" stroke-width="1.3"/>
<rect x="1285.9" y="166.2" width="21" height="2.4" fill="#4a5058"/>
<rect x="1291" y="162" width="2" height="5" fill="#4a5058"/>
<rect x="1285.9" y="185.5" width="21" height="2.4" fill="#4a5058"/>
<rect x="1291" y="186" width="2" height="5.5" fill="#4a5058"/>
<rect x="1294.4" y="173" width="12.4" height="3.2" fill="#2a7ad0"/>
<rect x="1294.4" y="178.6" width="8.3" height="3.2" fill="#2a7ad0"/>
<path d="M1290.5 177 L1283.5 170.5 L1281 173 L1283 175 H1276 V179 H1283 L1281 181 L1283.5 183.5 Z" fill="#f08020" stroke="#9a1a0a" stroke-width="1.3"/>
<path d="M1342.3 181.5 L1349.8 161.5 H1356.5 L1364 181.5 H1358.3 L1356.8 177 H1349.5 L1348 181.5 Z M1351 172.5 H1355.3 L1353.2 166 Z" fill="#5a80aa" stroke="#1f3b5c" stroke-width="1.5" fill-rule="evenodd"/>
<rect x="1338" y="183.8" width="30.5" height="7.4" fill="#800000"/>
<rect x="1407" y="161" width="21.3" height="16.7" fill="#f6d030"/>
<text x="1407.5" y="175.5" font-family="Liberation Sans" font-size="16" fill="#3a3a18">ab</text>
<path d="M1421.5 175 L1432 163.5 L1437.5 168.5 L1427 180 Z" fill="#d8dde2" stroke="#5a6470" stroke-width="1.4"/>
<path d="M1421.5 175 L1427 180 L1420 182.5 Z" fill="#e09a30" stroke="#a06010" stroke-width="1"/>
<rect x="1407" y="183.8" width="31.2" height="7.8" fill="#ffff00"/>
<path d="M1496 166 Q1504 166 1503.5 182" fill="none" stroke="#2f7ad8" stroke-width="3"/>
<path d="M1478 172 L1489 163 L1500 174 L1489 183 Z" fill="#c8ccd0" stroke="#4a5058" stroke-width="1.5"/>
<ellipse cx="1484" cy="165" rx="5" ry="3" fill="#e8ecf0" stroke="#4a5058" stroke-width="1.3"/>
<rect x="1477.5" y="184.5" width="29.5" height="6.5" fill="#fff" stroke="#000" stroke-width="1.8"/></svg>
<div style="position:absolute;left:419px;top:86px;width:544px;height:867px;background:#f9f9f9;border:2px solid #858585;box-sizing:border-box;box-shadow:2px 2px 4px rgba(0,0,0,0.5)"></div>
<div class="t" style="left:496px;top:95px;font-size:23.2px;color:#000;">Standar<u>d</u>formatierung</div>
<div class="t" style="right:1114px;top:95px;font-size:23.2px;color:#000">Strg+M</div>
<div style="position:absolute;left:481px;top:136px;width:475px;height:2px;background:#dfdfdf"></div>
<div class="t" style="left:496px;top:153px;font-size:23.2px;color:#000;">Zei<u>c</u>hen...</div>
<div class="t" style="left:496px;top:199px;font-size:23.2px;color:#000;"><u>A</u>bsatz...</div>
<div class="t" style="left:496px;top:245px;font-size:23.2px;color:#000;">Nummerierung und Au<u>f</u>zählungszeichen...</div>
<div class="t" style="left:496px;top:288px;font-size:23.2px;color:#000;"><u>S</u>eite...</div>
<div style="position:absolute;left:481px;top:329px;width:475px;height:2px;background:#dfdfdf"></div>
<div class="t" style="left:496px;top:341px;font-size:23.2px;color:#000;"><u>G</u>roß-/Kleinschreibung ändern</div>
<div style="position:absolute;left:937.5px;top:354.5px;width:0;height:0;border-top:5.5px solid transparent;border-bottom:5.5px solid transparent;border-left:6.5px solid #000"></div>
<div class="t" style="left:496px;top:380px;font-size:23.2px;color:#000;">S<u>p</u>alten...</div>
<div class="t" style="left:496px;top:419px;font-size:23.2px;color:#868686;"><u>B</u>ereiche...</div>
<div style="position:absolute;left:481px;top:459px;width:475px;height:2px;background:#dfdfdf"></div>
<div class="t" style="left:496px;top:477px;font-size:23.2px;color:#000;">For<u>m</u>atvorlagen</div>
<div class="t" style="right:1114px;top:477px;font-size:23.2px;color:#000">F11</div>
<div class="t" style="left:496px;top:519px;font-size:23.2px;color:#000;">AutoKorr<u>e</u>ktur</div>
<div style="position:absolute;left:937.5px;top:532.5px;width:0;height:0;border-top:5.5px solid transparent;border-bottom:5.5px solid transparent;border-left:6.5px solid #000"></div>
<div style="position:absolute;left:481px;top:560px;width:475px;height:2px;background:#dfdfdf"></div>
<div class="t" style="left:496px;top:573px;font-size:23.2px;color:#000;">Veran<u>k</u>erung</div>
<div style="position:absolute;left:937.5px;top:586.5px;width:0;height:0;border-top:5.5px solid transparent;border-bottom:5.5px solid transparent;border-left:6.5px solid #000"></div>
<div class="t" style="left:496px;top:611px;font-size:23.2px;color:#000;"><u>U</u>mlauf</div>
<div style="position:absolute;left:937.5px;top:624.5px;width:0;height:0;border-top:5.5px solid transparent;border-bottom:5.5px solid transparent;border-left:6.5px solid #000"></div>
<div class="t" style="left:496px;top:654px;font-size:23.2px;color:#000;">Ausric<u>h</u>tung</div>
<div style="position:absolute;left:937.5px;top:667.5px;width:0;height:0;border-top:5.5px solid transparent;border-bottom:5.5px solid transparent;border-left:6.5px solid #000"></div>
<div class="t" style="left:496px;top:697px;font-size:23.2px;color:#000;">A<u>n</u>ordnung</div>
<div style="position:absolute;left:937.5px;top:710.5px;width:0;height:0;border-top:5.5px solid transparent;border-bottom:5.5px solid transparent;border-left:6.5px solid #000"></div>
<div class="t" style="left:496px;top:735px;font-size:23.2px;color:#000;">Sp<u>i</u>egeln</div>
<div style="position:absolute;left:937.5px;top:748.5px;width:0;height:0;border-top:5.5px solid transparent;border-bottom:5.5px solid transparent;border-left:6.5px solid #000"></div>
<div class="t" style="left:496px;top:774px;font-size:23.2px;color:#000;"><u>G</u>ruppieren</div>
<div style="position:absolute;left:937.5px;top:787.5px;width:0;height:0;border-top:5.5px solid transparent;border-bottom:5.5px solid transparent;border-left:6.5px solid #000"></div>
<div style="position:absolute;left:481px;top:814px;width:475px;height:2px;background:#dfdfdf"></div>
<div class="t" style="left:496px;top:828px;font-size:23.2px;color:#000;"><u>O</u>bjekt</div>
<div style="position:absolute;left:937.5px;top:841.5px;width:0;height:0;border-top:5.5px solid transparent;border-bottom:5.5px solid transparent;border-left:6.5px solid #000"></div>
<div class="t" style="left:496px;top:870px;font-size:23.2px;color:#868686;">Rah<u>m</u>en/Objekt...</div>
<div class="t" style="left:496px;top:912px;font-size:23.2px;color:#868686;">Bi<u>l</u>d...</div>
<svg style="position:absolute;left:0;top:0" width="2048" height="1247"><path d="M452.8 180 L459 153.8 H464.5 L470 180 H465 L463.8 174.5 H458.8 L457.5 180 Z M459.8 169.5 H463 L461.4 161 Z" fill="#4f76a0" stroke="#223f5e" stroke-width="1.3" fill-rule="evenodd"/>
<g opacity="1"><rect x="439.25" y="162.25" width="15.0" height="19.0" rx="1.5" fill="#e8ebee" stroke="#7b8896" stroke-width="1.5"/><rect x="442.75" y="167.65" width="8" height="5" rx="2" fill="#f4f4f4" stroke="#26313c" stroke-width="1.4"/><rect x="445.75" y="164.575" width="2" height="3.0749999999999997" fill="#26313c"/><rect x="445.75" y="172.65" width="2" height="7.175" fill="#26313c"/></g>
<path d="M455 200.5 H469.5 V204.5 H467 V224.5 H462.5 V204.5 H461 V224.5 H456.5 V214 Q447 213 447.5 207 Q448 200.5 455 200.5 Z" fill="#4f76a0" stroke="#223f5e" stroke-width="1.3"/>
<g opacity="1"><rect x="439.25" y="208.25" width="15.0" height="19.5" rx="1.5" fill="#e8ebee" stroke="#7b8896" stroke-width="1.5"/><rect x="442.75" y="213.8" width="8" height="5" rx="2" fill="#f4f4f4" stroke="#26313c" stroke-width="1.4"/><rect x="445.75" y="210.65" width="2" height="3.15" fill="#26313c"/><rect x="445.75" y="218.8" width="2" height="7.35" fill="#26313c"/></g>
<circle cx="441.9" cy="249.7" r="3.4" fill="#2a4a70" stroke="#18304e" stroke-width="1"/>
<circle cx="441.9" cy="259" r="3.4" fill="#2a4a70" stroke="#18304e" stroke-width="1"/>
<circle cx="441.9" cy="268.1" r="3.4" fill="#2a4a70" stroke="#18304e" stroke-width="1"/>
<rect x="448" y="248.3" width="15" height="2" fill="#333"/>
<rect x="447" y="258.2" width="5" height="1.6" fill="#555"/><rect x="447" y="267.3" width="5" height="1.6" fill="#555"/>
<g opacity="1"><rect x="452.95" y="254.25" width="14.900000000000034" height="19.5" rx="1.5" fill="#e8ebee" stroke="#7b8896" stroke-width="1.5"/><rect x="456.4" y="259.8" width="8" height="5" rx="2" fill="#f4f4f4" stroke="#26313c" stroke-width="1.4"/><rect x="459.4" y="256.65" width="2" height="3.15" fill="#26313c"/><rect x="459.4" y="264.8" width="2" height="7.35" fill="#26313c"/></g>
<g transform="translate(438.3,477.2)"><path d="M2.6 0.8 H29.8 V16.5 L22.5 24.2 H2.6 Z" fill="#e4ebf2" stroke="#6f7e8e" stroke-width="1.6"/><path d="M29.8 16.5 H22.5 V24.2" fill="#fbfdff" stroke="#6f7e8e" stroke-width="1.4"/><rect x="0.8" y="8.2" width="16" height="20" rx="1.5" fill="#e4ebf2" stroke="#6f7e8e" stroke-width="1.6"/><rect x="4.8" y="12.8" width="8" height="5" rx="2" fill="#f4f4f4" stroke="#2a3440" stroke-width="1.4"/><rect x="7.8" y="10" width="2" height="3" fill="#2a3440"/><rect x="7.8" y="17.8" width="2" height="7" fill="#2a3440"/></g>
<rect x="438.5" y="654.8" width="30" height="30" fill="#f8f8f8" stroke="#b8b8b8" stroke-width="1.5"/>
<rect x="437.8" y="654.3" width="4.5" height="31" fill="#2a8a10"/><rect x="441" y="655" width="1.5" height="29.5" fill="#9ad050"/>
<rect x="442.1" y="663.9" width="9.7" height="11.9" rx="1" fill="#3a86e0" stroke="#1f56b0" stroke-width="0.8"/>
<path d="M453.8 671 L461 663.8 L464 666.8 L461.5 669 H468.5 V673 H461.5 L464 675.2 L461 678.2 Z" fill="#f07a20" stroke="#9a1a0a" stroke-width="1.3"/>
<g><rect x="439" y="871.3" width="29.2" height="23.2" fill="#f6f6f6" stroke="#d4d4d4" stroke-width="1.6"/><rect x="455.5" y="878" width="8" height="12" fill="none" stroke="#dedede" stroke-width="1.4"/></g>
<g opacity="1"><rect x="439.05" y="878.95" width="15.5" height="19.299999999999955" rx="1.5" fill="#f2f2f2" stroke="#d0d0d0" stroke-width="1.5"/><rect x="442.8" y="884.44" width="8" height="5" rx="2" fill="#f4f4f4" stroke="#c4c4c4" stroke-width="1.4"/><rect x="445.8" y="881.32" width="2" height="3.119999999999993" fill="#c4c4c4"/><rect x="445.8" y="889.44" width="2" height="7.279999999999983" fill="#c4c4c4"/></g></svg>
</body></html>
